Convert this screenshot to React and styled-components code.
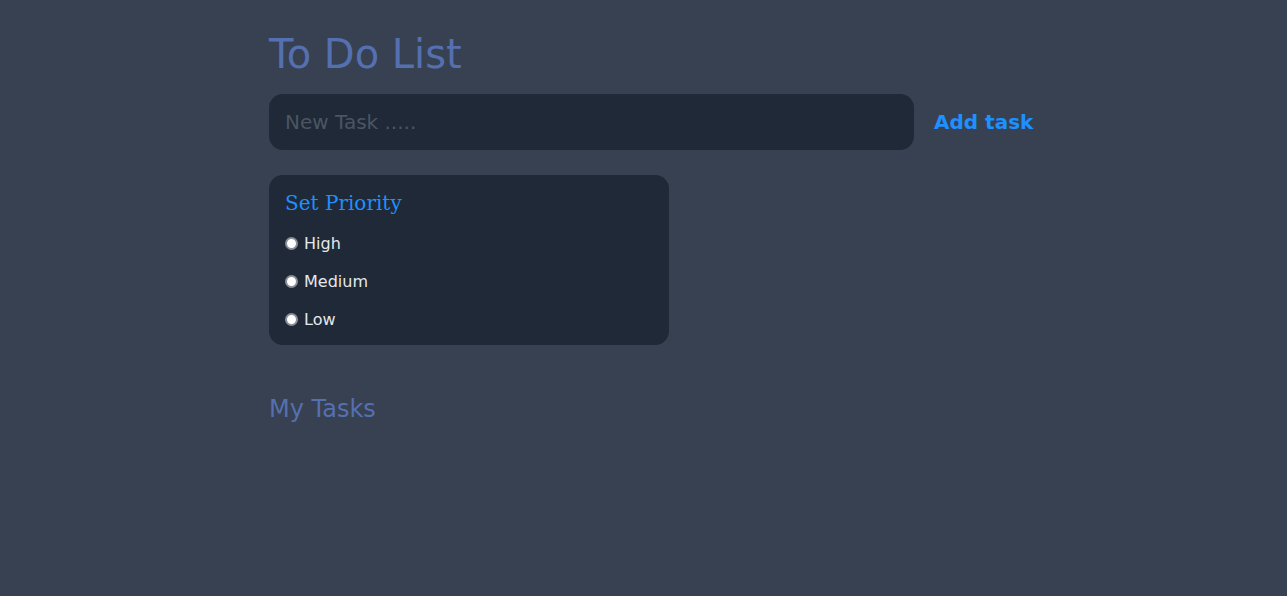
import React, { useState } from "react";
import styled, { createGlobalStyle } from "styled-components";

const GlobalStyle = createGlobalStyle`
  html, body {
    margin: 0;
    padding: 0;
    background: #374151;
    min-height: 100%;
  }
  body {
    font-family: "DejaVu Sans", sans-serif;
  }
`;

/* ---------------------------
 *    layout
 * ---------------------------
 */

const Page = styled.main`
  width: 749px;
  margin: 0 auto;
  padding-top: 31px;
`;

const Title = styled.h1`
  margin: 0 0 16px;
  font-size: 40px;
  font-weight: normal;
  line-height: 47px;
  color: #5470b0;
`;

const InputRow = styled.form`
  display: flex;
  align-items: center;
`;

const TaskInput = styled.input`
  flex: none;
  width: 645px;
  height: 56px;
  box-sizing: border-box;
  padding: 0 16px;
  border: none;
  border-radius: 14px;
  background: #1f2937;
  color: #e5e7eb;
  font-family: "DejaVu Sans", sans-serif;
  font-size: 20px;
  outline: none;

  &::placeholder {
    color: #4b5563;
  }
`;

const AddButton = styled.button`
  flex: none;
  padding: 0 20px;
  background: none;
  border: none;
  color: #1e90ff;
  font-family: "DejaVu Sans", sans-serif;
  font-size: 20px;
  font-weight: bold;
  cursor: pointer;
  white-space: nowrap;
`;

const PriorityBox = styled.fieldset`
  margin: 25px 0 0;
  width: 400px;
  height: 170px;
  box-sizing: border-box;
  padding: 17px 16px 7px;
  border: none;
  border-radius: 14px;
  background: #1f2937;
`;

const PriorityTitle = styled.h3`
  margin: 0 0 9px;
  font-family: "DejaVu Serif", serif;
  font-size: 20px;
  font-weight: normal;
  line-height: 23px;
  color: #1e90ff;
`;

const Option = styled.label`
  display: flex;
  align-items: center;
  gap: 6px;
  height: 38px;
  color: #e5e7eb;
  font-size: 16px;
  cursor: pointer;
`;

const Radio = styled.input`
  appearance: none;
  flex: none;
  width: 13px;
  height: 13px;
  margin: 0;
  box-sizing: border-box;
  border-radius: 50%;
  border: 2px solid #8d8f96;
  background: #ffffff;

  &:checked {
    background: radial-gradient(circle, #1e90ff 0 2.5px, #ffffff 3px);
  }
`;

const SubTitle = styled.h2`
  margin: 51px 0 0;
  font-size: 24px;
  font-weight: normal;
  line-height: 27px;
  color: #5470b0;
`;

const priorities = ["High", "Medium", "Low"];

export default function App() {
  const [task, setTask] = useState("");
  const [priority, setPriority] = useState("");

  return (
    <>
      <GlobalStyle />
      <Page>
        <Title>To Do List</Title>

        <InputRow onSubmit={(e) => e.preventDefault()}>
          <TaskInput
            placeholder="New Task ....."
            value={task}
            onChange={(e) => setTask(e.target.value)}
          />
          <AddButton type="submit">Add task</AddButton>
        </InputRow>

        <PriorityBox>
          <PriorityTitle>Set Priority</PriorityTitle>
          {priorities.map((p) => (
            <Option key={p}>
              <Radio
                type="radio"
                name="priority"
                checked={priority === p}
                onChange={() => setPriority(p)}
              />
              {p}
            </Option>
          ))}
        </PriorityBox>

        <SubTitle>My Tasks</SubTitle>
      </Page>
    </>
  );
}
